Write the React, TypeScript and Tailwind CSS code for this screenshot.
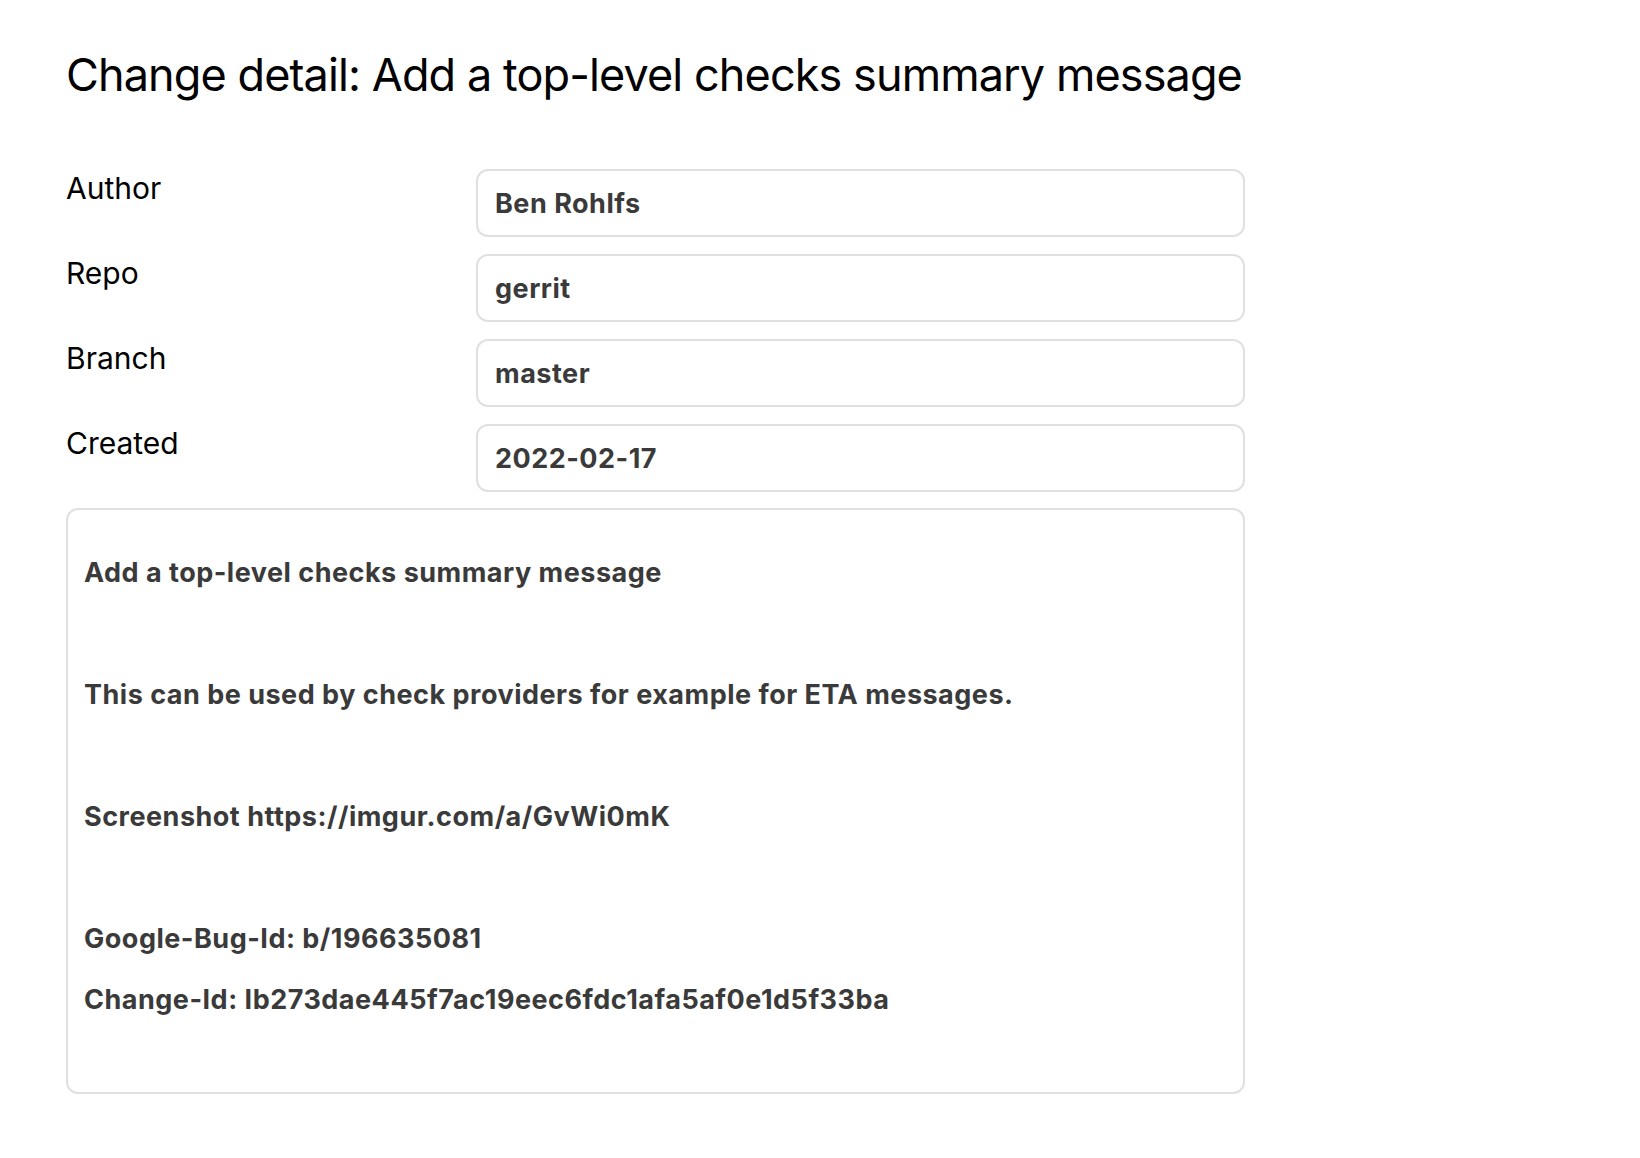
import React from "react";

const rows: [string, string][] = [
  ["Author", "Ben Rohlfs"],
  ["Repo", "gerrit"],
  ["Branch", "master"],
  ["Created", "2022-02-17"],
];

const lines = [
  "Add a top-level checks summary message",
  "",
  "This can be used by check providers for example for ETA messages.",
  "",
  "Screenshot https://imgur.com/a/GvWi0mK",
  "",
  "Google-Bug-Id: b/196635081",
  "Change-Id: Ib273dae445f7ac19eec6fdc1afa5af0e1d5f33ba",
  "",
];

export default function App() {
  return (
    <div className="min-h-[1158px] w-[1640px] bg-white pl-[66px] pt-[47px] font-['Inter',sans-serif] text-black">
      <h1 className="text-[45px] font-normal leading-[55px] tracking-[-0.9px]">
        Change detail: Add a top-level checks summary message
      </h1>
      <div className="mt-[67px] flex w-[1179px] flex-col gap-[17px]">
        {rows.map(([label, value]) => (
          <div key={label} className="grid grid-cols-[410px_769px]">
            <div className="pt-[1px] text-[30px] leading-[36px]">{label}</div>
            <div className="flex h-[68px] items-center rounded-[12px] border-2 border-[#e0e0e0] px-[17px] pt-[3px] text-[27px] font-bold tracking-[0.5px] text-[#3a3a3a]">
              {value}
            </div>
          </div>
        ))}
      </div>
      <div className="mt-[16px] w-[1179px] rounded-[12px] border-2 border-[#e0e0e0] px-[16px] pb-[1px] pt-[32px] text-[27px] font-bold leading-[61px] tracking-[0.5px] text-[#3a3a3a]">
        {lines.map((l, i) => (
          <div key={i} className="h-[61px] whitespace-pre">
            {l}
          </div>
        ))}
      </div>
    </div>
  );
}
